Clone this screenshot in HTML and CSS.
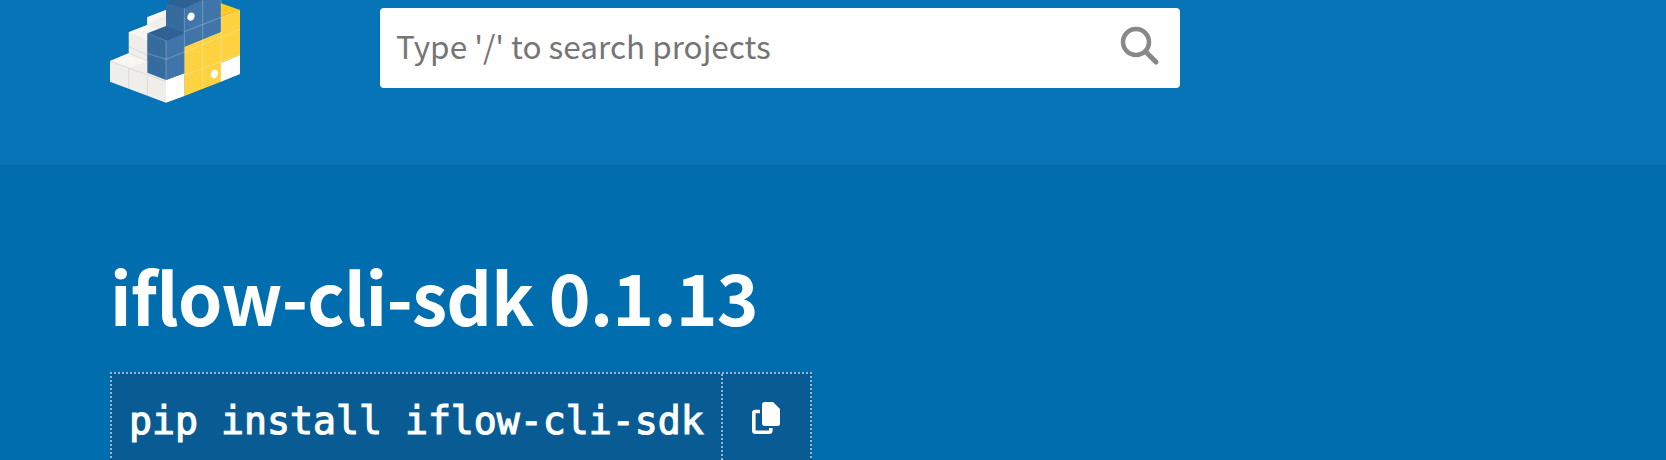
FILE: index.html
```html
<!DOCTYPE html>
<html lang="en">
<head>
    <meta charset="UTF-8">
    <meta name="viewport" content="width=device-width, initial-scale=1.0">
    <title>iflow-cli-sdk</title>
    <link rel="stylesheet" href="styles.css">
</head>
<body>
    <header class="site-header">
        <svg class="site-logo" viewBox="0 0 510 360" aria-hidden="true">
            <polygon fill="#efeeea" points="60,183 116,160 116,97 172,75 172,52 228,30 228,308 60,245"/>
            <polygon fill="#f7f6f3" points="60,183 116,160 172,183 116,205"/>
            <polygon fill="#f7f6f3" points="116,97 172,75 228,97 172,120"/>
            <polygon fill="#f7f6f3" points="172,52 228,30 240,35 172,75"/>
            <polygon fill="#ffffff" points="228,240 283,220 283,288 228,308"/>
            <polygon fill="#ffffff" points="393,188 450,165 450,222 393,245"/>
            <polygon fill="#ffd242" points="283,140 393,95 393,50 450,30 450,165 393,188 393,245 283,288"/>
            <polygon fill="#ffc91f" points="393,10 450,30 393,50"/>
            <polygon fill="#3f75a8" points="283,25 335,0 393,0 393,95 283,140 283,220 228,240 228,122 283,100"/>
            <polygon fill="#366b9d" points="228,8 283,25 283,100 228,78"/>
            <polygon fill="#2f6192" points="228,8 250,0 335,0 283,25"/>
            <polygon fill="#366b9d" points="172,100 228,122 228,240 172,218"/>
            <polygon fill="#2f6192" points="172,100 228,78 283,100 228,122"/>
            <path class="logo-grid-grey" d="M116,205 V268 M172,228 V290 M60,183 L228,245 M116,160 L172,183 M116,140 L172,165 M116,97 V160 M172,120 V183"/>
            <path class="logo-grid-light" d="M283,25 V288 M338,0 V265 M393,0 V245 M172,160 L228,178 L450,88 M283,95 L450,30 M283,225 L450,165 M228,122 V240"/>
            <ellipse class="logo-eye" cx="303" cy="50" rx="10.500" ry="12.500" transform="rotate(20 303 50)"/>
            <ellipse class="logo-eye" cx="373" cy="222" rx="10.500" ry="12.500" transform="rotate(20 373 222)"/>
        </svg>
        <form class="search-form">
            <span class="search-placeholder">Type '/' to search projects</span>
            <svg class="search-icon" viewBox="0 0 40 40" aria-hidden="true">
                <circle cx="16" cy="16" r="13" fill="none" stroke="#888888" stroke-width="4.5"/>
                <path d="M25.5 25.5 L36 36" stroke="#888888" stroke-width="5" stroke-linecap="round"/>
            </svg>
        </form>
    </header>
    <main class="package-header">
        <h1 class="package-title">iflow-cli-sdk 0.1.13</h1>
        <div class="pip-command">
            <span class="pip-text">pip install iflow-cli-sdk</span>
            <button class="copy-button" type="button" aria-label="Copy">
                <svg class="copy-icon" viewBox="0 0 28 32" aria-hidden="true">
                    <path fill="#ffffff" d="M13 0H21L28 7V21.500Q28 24 25.500 24H13Q10 24 10 21.500V2.500Q10 0 13 0Z"/>
                    <path fill="none" stroke="#ffffff" stroke-width="3.600" d="M8 9.500H3.500Q1.800 9.500 1.800 11V28.500Q1.800 30.200 3.500 30.200H17Q18.800 30.200 18.800 28.500V26"/>
                </svg>
            </button>
        </div>
    </main>
</body>
</html>
```

FILE: styles.css
```css
html, body {
    height: 460px;
    overflow: hidden;
}

body {
    margin: 0;
    background-color: #006eae;
    font-family: "Noto Sans CJK SC", "Noto Sans", sans-serif;
}

.site-header {
    display: flex;
    align-items: flex-start;
    gap: 120px;
    height: 165px;
    padding-left: 90px;
    background-color: #0874b8;
    border-bottom: 1px solid #0268a6;
}

.site-logo {
    width: 170px;
    height: 120px;
    flex-shrink: 0;
}

.logo-grid-grey,
.logo-grid-light {
    fill: none;
    stroke-width: 2;
}

.logo-grid-grey {
    stroke: rgba(0, 0, 0, 0.14);
}

.logo-grid-light {
    stroke: rgba(255, 255, 255, 0.4);
}

.logo-eye {
    fill: #ffffff;
}

.search-form {
    display: flex;
    align-items: center;
    justify-content: space-between;
    box-sizing: border-box;
    width: 800px;
    height: 80px;
    margin-top: 8px;
    padding: 0 20px 0 16px;
    background-color: #ffffff;
    border-radius: 4px;
}

.search-placeholder {
    padding-bottom: 6px;
    font-size: 31.5px;
    color: #757575;
}

.search-icon {
    width: 40px;
    height: 40px;
    margin-bottom: 4px;
}

.package-header {
    padding: 79px 0 0 110px;
}

.package-title {
    margin: 0;
    font-size: 71px;
    font-weight: 700;
    letter-spacing: -0.75px;
    line-height: 100px;
    color: #ffffff;
}

.pip-command {
    display: inline-flex;
    height: 98px;
    margin-top: 27px;
    box-sizing: border-box;
    background-color: #095c93;
    border: 2px dotted #8fb9d6;
    color: #ffffff;
}

.pip-text {
    display: flex;
    align-items: center;
    padding: 0 17px 0 17px;
    font-family: "DejaVu Sans Mono", monospace;
    font-size: 38.2px;
    -webkit-text-stroke: 1.1px #ffffff;
}

.copy-button {
    width: 89px;
    padding: 0 0 4px;
    background: none;
    border: 0;
    border-left: 2px dotted #8fb9d6;
}

.copy-icon {
    width: 28px;
    height: 32px;
}
```
